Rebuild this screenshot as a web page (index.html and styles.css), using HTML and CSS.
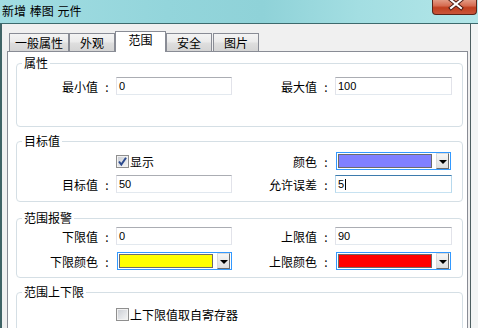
FILE: index.html
```html
<!DOCTYPE html>
<html lang="zh-CN">
<head>
    <meta charset="UTF-8">
    <title>新增 棒图 元件</title>
    <link rel="stylesheet" href="styles.css">
</head>
<body>
    <div class="titlebar">
        <span class="title">新增 棒图 元件</span>
        <div class="close">
            <svg width="45" height="15" viewBox="0 0 45 15">
                <path d="M19 1 L29 9 M29 1 L19 9" stroke="#4a1a12" stroke-width="4" stroke-linecap="square"/>
                <path d="M19 1 L29 9 M29 1 L19 9" stroke="#ffffff" stroke-width="2" stroke-linecap="square"/>
            </svg>
        </div>
    </div>

    <div class="frame">
        <div class="tabs">
            <div class="tab tab-wide">一般属性</div>
            <div class="tab">外观</div>
            <div class="tab active">范围</div>
            <div class="tab">安全</div>
            <div class="tab tab-last">图片</div>
        </div>

        <div class="panel">
            <fieldset class="group group-attr">
                <legend>属性</legend>
                <div class="fields">
                    <label class="label">最小值<span class="colon">:</span></label>
                    <div class="textbox">0</div>
                    <label class="label">最大值<span class="colon">:</span></label>
                    <div class="textbox">100</div>
                </div>
            </fieldset>

            <fieldset class="group group-target">
                <legend>目标值</legend>
                <div class="fields">
                    <span></span>
                    <div class="check">
                        <span class="checkbox">
                            <svg width="11" height="11" viewBox="0 0 11 11">
                                <path d="M2 5.5 L4.3 8.5 L9 1.8" fill="none" stroke="#2b4a8e" stroke-width="2"/>
                            </svg>
                        </span>
                        <span>显示</span>
                    </div>
                    <label class="label">颜色<span class="colon">:</span></label>
                    <div class="combo"><span class="swatch swatch-blue"></span><span class="drop"></span></div>

                    <label class="label">目标值<span class="colon">:</span></label>
                    <div class="textbox">50</div>
                    <label class="label">允许误差<span class="colon">:</span></label>
                    <div class="textbox focused">5<span class="caret"></span></div>
                </div>
            </fieldset>

            <fieldset class="group group-alarm">
                <legend>范围报警</legend>
                <div class="fields">
                    <label class="label">下限值<span class="colon">:</span></label>
                    <div class="textbox">0</div>
                    <label class="label">上限值<span class="colon">:</span></label>
                    <div class="textbox">90</div>

                    <label class="label">下限颜色<span class="colon">:</span></label>
                    <div class="combo"><span class="swatch swatch-yellow"></span><span class="drop"></span></div>
                    <label class="label">上限颜色<span class="colon">:</span></label>
                    <div class="combo"><span class="swatch swatch-red"></span><span class="drop"></span></div>
                </div>
            </fieldset>

            <fieldset class="group group-limits">
                <legend>范围上下限</legend>
                <div class="fields">
                    <span></span>
                    <div class="check check-span">
                        <span class="checkbox"></span>
                        <span>上下限值取自寄存器</span>
                    </div>
                </div>
            </fieldset>
        </div>
    </div>
</body>
</html>
```

FILE: styles.css
```css
* {
    box-sizing: border-box;
}

body {
    margin: 0;
    width: 478px;
    height: 328px;
    overflow: hidden;
    background: #f2f4f4;
    font-family: "Noto Sans CJK SC", sans-serif;
    font-size: 12px;
    color: #000;
}

/* title bar */
.titlebar {
    height: 24px;
    display: flex;
    align-items: flex-start;
    border-bottom: 1px solid #3d6a6d;
    background: linear-gradient(to right, #a2dde2 0%, #93d5db 35%, #8fd2d8 55%, #a3dee2 75%, #b2e6e8 100%);
}

.title {
    padding: 3px 0 0 2px;
    line-height: 16px;
    white-space: pre;
    word-spacing: 1px;
}

.close {
    margin-left: auto;
    margin-right: 1px;
    width: 45px;
    height: 15px;
    border: 1px solid #5a2418;
    border-top: none;
    border-radius: 0 0 4px 4px;
    background: linear-gradient(#e39a83 0%, #d66d52 40%, #c1401f 55%, #c9553a 100%);
    overflow: hidden;
}

.close svg {
    display: block;
    margin: -1px 0 0 -1px;
}

/* window body */
.frame {
    width: 471px;
    height: 304px;
    padding: 7px 0 0 5px;
    background: #f0f0f0;
    border-left: 2px solid #3f6365;
    border-right: 1px solid #4c5e60;
    overflow: hidden;
}

.tabs {
    display: flex;
    align-items: flex-end;
    height: 20px;
    margin-left: 2px;
}

.tab {
    width: 46px;
    height: 18px;
    border: 1px solid #898c95;
    border-bottom: none;
    background: linear-gradient(#f4f4f4 0%, #ebebeb 45%, #dedede 55%, #d4d4d4 100%);
    text-align: center;
    line-height: 17px;
}

.tab-wide {
    width: 60px;
}

.tab-last {
    margin-left: 1px;
}

.tab.active {
    position: relative;
    z-index: 1;
    width: 51px;
    height: 21px;
    margin-bottom: -1px;
    background: #fff;
    line-height: 16px;
}

.panel {
    width: 461px;
    height: 290px;
    padding: 4px 0 0 8px;
    border: 1px solid #898c95;
    background: #fff;
}

/* group boxes */
.group {
    width: 447px;
    margin: 0 0 7px;
    padding: 7px 0 31px;
    border: 1px solid #d5dfe5;
    border-radius: 4px;
}

.group legend {
    margin-left: 5px;
    padding: 0 2px;
    line-height: 14px;
}

.group-target {
    padding: 4px 0 8px;
    margin-bottom: 9px;
}

.group-alarm {
    padding: 2px 0 7px;
}

.group-limits {
    padding: 7px 0 40px;
}

.fields {
    display: grid;
    grid-template-columns: 99px 116px 103px 117px;
    align-items: center;
}

.group-target .fields {
    row-gap: 5px;
}

.group-alarm .fields {
    row-gap: 7px;
}

.label {
    display: flex;
    justify-content: flex-end;
    align-items: center;
    padding-right: 3px;
    white-space: nowrap;
}

.colon {
    width: 12px;
    margin-left: 3px;
    text-align: center;
}

.textbox {
    height: 18px;
    padding-left: 2px;
    border: 1px solid;
    border-color: #abadb3 #e2e3ea #e3e9ef #e2e3ea;
    background: #fff;
    font-family: "Liberation Sans", Arial, sans-serif;
    font-size: 11px;
    line-height: 16px;
}

.textbox.focused {
    border-color: #3d7bad #b7d9ed #c7e2f1 #b7d9ed;
}

.caret {
    display: inline-block;
    width: 1px;
    height: 11px;
    margin-left: 1px;
    background: #000;
    vertical-align: -2px;
}

/* colour picker */
.combo {
    display: flex;
    align-items: center;
    width: 115px;
    height: 18px;
    margin-left: 1px;
    padding: 0 1px;
    border: 1px solid #3399ff;
    background: #fff;
}

.swatch {
    width: 94px;
    height: 14px;
    border: 1px solid #6b6b6b;
}

.swatch-blue {
    background: #8080ff;
}

.swatch-yellow {
    background: #ffff00;
}

.swatch-red {
    background: #ff0000;
}

.drop {
    display: flex;
    align-items: center;
    justify-content: center;
    width: 13px;
    height: 16px;
    margin-left: auto;
    border: 1px solid;
    border-color: #dadada #6a6a6a #6a6a6a #dadada;
    background: linear-gradient(#f6f6f6, #dedede);
}

.drop::after {
    content: "";
    border-left: 4px solid transparent;
    border-right: 4px solid transparent;
    border-top: 4px solid #000;
    margin-top: 1px;
}

/* check boxes */
.check {
    display: flex;
    align-items: center;
    gap: 1px;
    white-space: nowrap;
}

.check-span {
    grid-column: 2 / 5;
}

.checkbox {
    display: flex;
    align-items: center;
    justify-content: center;
    width: 13px;
    height: 13px;
    border: 1px solid #8f8f8f;
    background: linear-gradient(135deg, #c9ccd2 0%, #e4e6e9 60%, #f6f6f6 100%);
    box-shadow: inset 0 0 0 1px #f2f2f2;
}
```
